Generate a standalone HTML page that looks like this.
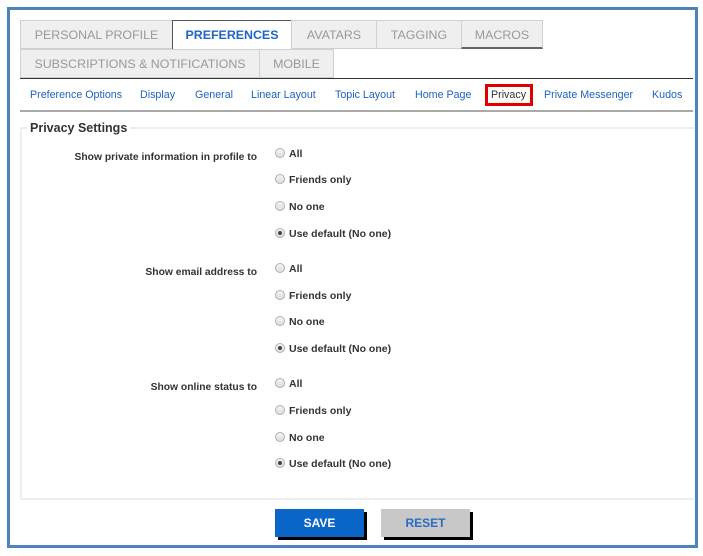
<!DOCTYPE html>
<html><head><meta charset="utf-8"><style>
*{margin:0;padding:0;box-sizing:border-box}
body{width:703px;height:556px;background:#fff;position:relative;overflow:hidden;font-family:"Liberation Sans",Arial,sans-serif}
.frame{position:absolute;left:7px;top:7px;width:691px;height:541px;border:3px solid #4f81bd}
.tab{position:absolute;height:29px;background:#efefef;border:1px solid #d0d0d0;color:#999;font-size:12.4px;line-height:28px;text-align:center}
.tab.act{background:#fff;border:1px solid #555;border-bottom:none;color:#1a66c9;font-weight:bold;height:30px}
.ln{position:absolute;left:20px;width:673px}
.sub{position:absolute;top:89px;font-size:10.7px;color:#1f63b8}
.lbl{position:absolute;right:446px;font-size:10.3px;font-weight:bold;color:#333;white-space:nowrap}
.r{position:absolute;left:275px;font-size:10.5px;font-weight:bold;color:#333;white-space:nowrap}
.r i{display:inline-block;width:10px;height:10px;border:1px solid #b0b0b0;border-radius:50%;background:linear-gradient(#f4f4f4,#ddd);vertical-align:-1px;margin-right:4px;position:relative}
.r i.on:after{content:"";position:absolute;left:2px;top:2px;width:4px;height:4px;border-radius:50%;background:#444}
.btn{position:absolute;top:509px;height:28px;font-size:12px;font-weight:bold;text-align:center;line-height:28px;box-shadow:3px 3px 0 #000}
</style></head><body>
<div class="frame"></div>
<div class="tab" style="left:20px;top:20px;width:153px">PERSONAL PROFILE</div>
<div class="tab act" style="left:172px;top:20px;width:120px">PREFERENCES</div>
<div class="tab" style="left:291px;top:20px;width:86px">AVATARS</div>
<div class="tab" style="left:376px;top:20px;width:86px">TAGGING</div>
<div class="tab" style="left:461px;top:20px;width:82px;border-bottom:2px solid #666">MACROS</div>
<div class="tab" style="left:20px;top:49px;width:240px">SUBSCRIPTIONS &amp; NOTIFICATIONS</div>
<div class="tab" style="left:259px;top:49px;width:75px">MOBILE</div>
<div class="ln" style="top:78px;height:1px;background:#333"></div>
<div class="sub" style="left:30px">Preference Options</div>
<div class="sub" style="left:140px">Display</div>
<div class="sub" style="left:195px">General</div>
<div class="sub" style="left:251px">Linear Layout</div>
<div class="sub" style="left:335px">Topic Layout</div>
<div class="sub" style="left:415px">Home Page</div>
<div style="position:absolute;left:485px;top:84px;width:48px;height:22px;border:3px solid #e00000"></div>
<div class="sub" style="left:491px;color:#333">Privacy</div>
<div class="sub" style="left:544px">Private Messenger</div>
<div class="sub" style="left:652px">Kudos</div>
<div class="ln" style="top:110px;height:2px;background:#aaa"></div>
<div style="position:absolute;left:20px;top:127px;width:674px;height:373px;border:2px solid #eee;border-right:none"></div>
<div style="position:absolute;left:27px;top:121px;background:#fff;padding:0 3px;font-size:12.5px;font-weight:bold;color:#333">Privacy Settings</div>
<div class="lbl" style="top:152px">Show private information in profile to</div>
<div class="r" style="top:148px"><i></i>All</div>
<div class="r" style="top:174px"><i></i>Friends only</div>
<div class="r" style="top:201px"><i></i>No one</div>
<div class="r" style="top:228px"><i class="on"></i>Use default (No one)</div>
<div class="lbl" style="top:267px">Show email address to</div>
<div class="r" style="top:263px"><i></i>All</div>
<div class="r" style="top:290px"><i></i>Friends only</div>
<div class="r" style="top:316px"><i></i>No one</div>
<div class="r" style="top:343px"><i class="on"></i>Use default (No one)</div>
<div class="lbl" style="top:382px">Show online status to</div>
<div class="r" style="top:378px"><i></i>All</div>
<div class="r" style="top:405px"><i></i>Friends only</div>
<div class="r" style="top:432px"><i></i>No one</div>
<div class="r" style="top:458px"><i class="on"></i>Use default (No one)</div>
<div class="btn" style="left:275px;width:89px;background:#0a66c8;color:#fff">SAVE</div>
<div class="btn" style="left:381px;width:89px;background:#c8c8c8;color:#2a6bc4">RESET</div>
</body></html>
